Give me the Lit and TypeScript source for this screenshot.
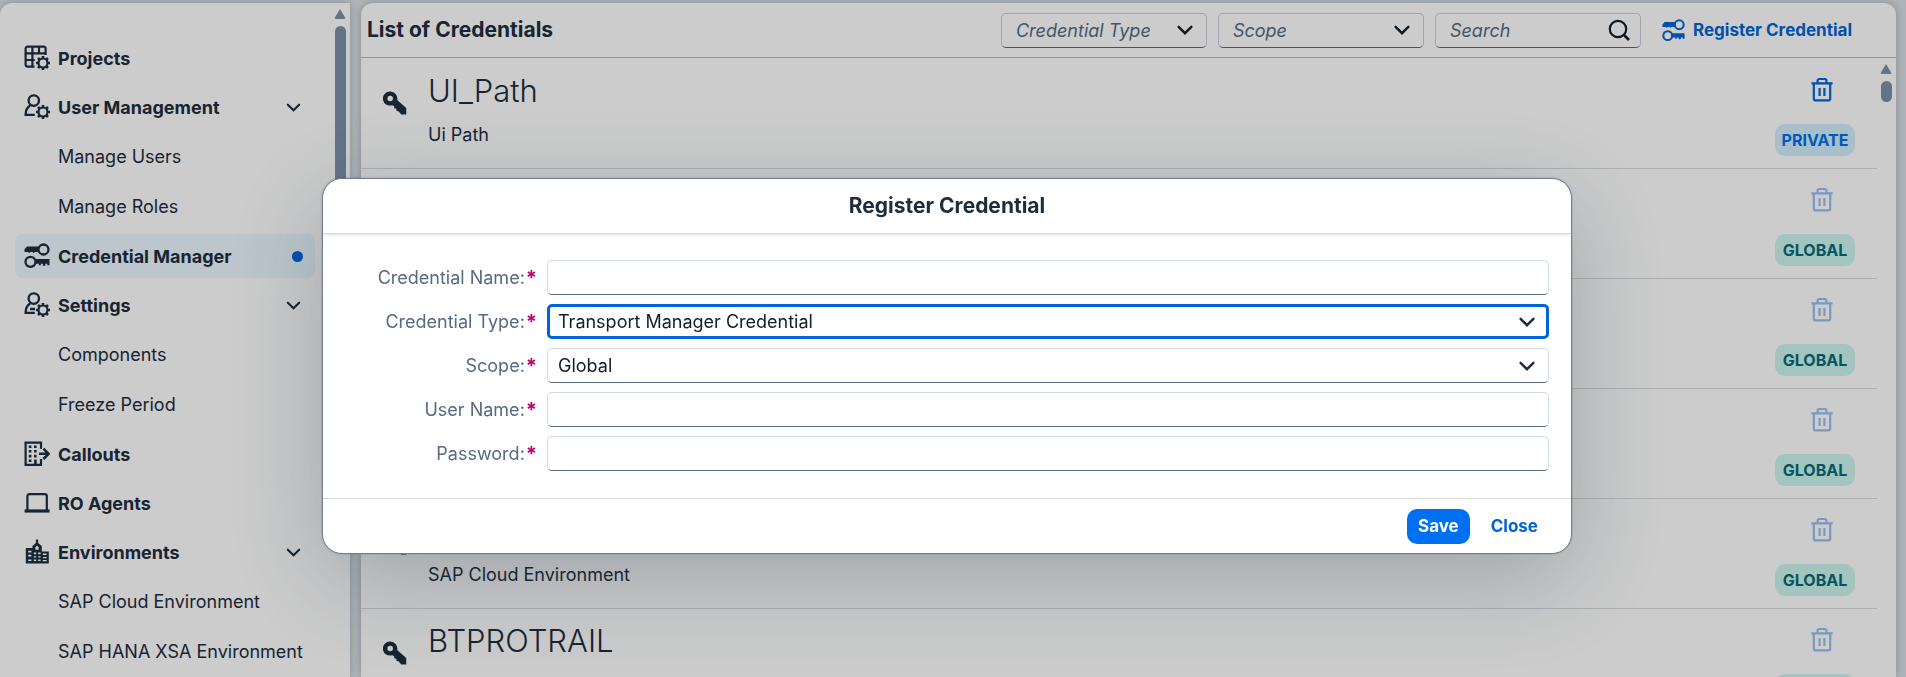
import { LitElement, html, css, svg, nothing, TemplateResult } from 'lit';
import { customElement, property } from 'lit/decorators.js';
import { classMap } from 'lit/directives/class-map.js';

const gear = svg`
  <circle cx="19" cy="18" r="4.5" fill="none" stroke="currentColor" stroke-width="2.2"/>
  <path d="M19 11v2.4M19 22.6V25M12 18h2.400M23.600 18H26M14 13l1.800 1.800M22.200 21.200L24 23M14 23l1.800-1.800M22.200 14.800L24 13" stroke="currentColor" stroke-width="2.600"/>`;

const keys = svg`
  <circle cx="19.5" cy="6.5" r="5" fill="none" stroke="currentColor" stroke-width="2.3"/>
  <path d="M14.8 3.4H3L.5 6.2V9H4l1.200 1 1.200-1h2l1.300 1 1.300-1h4z" fill="currentColor"/>
  <circle cx="6.5" cy="18.8" r="5" fill="none" stroke="currentColor" stroke-width="2.3"/>
  <path d="M11.200 16H25.500v6.200h-2.200v-1.400h-2v2h-2.400v-2h-2v1.400h-2v-1.400h-3.700z" fill="currentColor"/>`;

const icons: Record<string, TemplateResult> = {
  projects: svg`
    <path d="M10.500 21.600H3.600a2 2 0 0 1-2-2V3.600a2 2 0 0 1 2-2h16a2 2 0 0 1 2 2v6.400M1.600 8.400h20M1.600 15h9.200M8.400 1.600v20M15 1.600v6.800" fill="none" stroke="currentColor" stroke-width="2.200"/>${gear}`,
  user: svg`
    <circle cx="9.8" cy="6.600" r="5.200" fill="none" stroke="currentColor" stroke-width="2.300"/>
    <path d="M6.200 11.400C2.800 13.400 1.600 16.800 1.600 20.800h9.200" fill="none" stroke="currentColor" stroke-width="2.300"/>${gear}`,
  settings: svg`
    <circle cx="9.8" cy="6.600" r="5.200" fill="none" stroke="currentColor" stroke-width="2.300"/>
    <path d="M6.200 11.400C2.800 13.400 1.600 16.800 1.600 20.800h9.200M6 17h5" fill="none" stroke="currentColor" stroke-width="2.300"/>${gear}`,
  keys,
  callouts: svg`
    <path d="M17 8V1.600H1.600v22.200H17v-5.800" fill="none" stroke="currentColor" stroke-width="2.200"/>
    <path d="M11.400 23.600v-5M15 12.800h9M19.400 7.600l5.200 5.200-5.200 5.200" fill="none" stroke="currentColor" stroke-width="2.500"/>
    <path d="M4.800 4.400h2.600V7H4.800zM10 4.400h2.600V7H10zM4.800 9h2.600v2.600H4.800zM10 9h2.600v2.600H10zM4.800 13.800h2.600v2.600H4.800zM10 13.800h2.600v2.600H10zM4.800 18.400h2.600V21H4.800z" fill="currentColor"/>`,
  laptop: svg`
    <path d="M3.400 20V6.200a2 2 0 0 1 2-2h15.400a2 2 0 0 1 2 2V20" fill="none" stroke="currentColor" stroke-width="2.200"/>
    <path d="M.6 19.400h25v3.200H.600z" fill="currentColor"/>`,
  building: svg`
    <path fill-rule="evenodd" fill="currentColor" d="M11.900.600h2.200v3.400l3.700 3v5.400h7v12.200H1.800V9h6.600V7l3.500-3zM11.400 8v2.800h3.200V8L13 6.700zM4.200 11.800v1.600h3.200v-1.600zM9.800 13.600v1.600h2.400v-1.600zM14.200 13.600v1.600h2.400v-1.600zM18.800 14.600v1.400h3.800v-1.400zM4.200 15.800v1.600h3.200v-1.600zM9.800 17.200v1.400h2.400v-1.400zM14.200 17.200v1.400h2.400v-1.400zM18.800 18v1.200h3.800V18zM4.200 20.400V22h3.200v-1.600zM9.800 20.600V22h2.400v-1.400zM14.200 20.600V22h2.400v-1.400zM18.800 21v1.200h3.800V21z"/>`,
  key: svg`
    <path fill-rule="evenodd" fill="currentColor" d="M8 .600a7.600 7.600 0 0 1 7.400 9.200l9.800 8.600v7h-5.400l-3-3.400-2-.400-.400-2.400-2.200-.600-.200-2.400-2.200-.800A7.600 7.600 0 1 1 8 .600zM7.800 5.200a3 3 0 1 0 0 6 3 3 0 0 0 0-6z"/>`,
  trash: svg`
    <path d="M4.800 6.800v14.600a2 2 0 0 0 2 2h12.400a2 2 0 0 0 2-2V6.800M2.400 6.400h21.200M8.600 6V3.600a1.600 1.600 0 0 1 1.600-1.600h5.600a1.600 1.600 0 0 1 1.600 1.600V6M10.600 11v8M15.400 11v8" fill="none" stroke="currentColor" stroke-width="2.200"/>`,
  search: svg`
    <circle cx="12" cy="12" r="8.200" fill="none" stroke="currentColor" stroke-width="2.200"/>
    <path d="M18 18l5 5" stroke="currentColor" stroke-width="2.600"/>`,
  chevron: svg`
    <path d="M6.600 9.800l6.400 6.400 6.400-6.400" fill="none" stroke="currentColor" stroke-width="2.400" stroke-linecap="round"/>`,
};

@customElement('sap-icon')
export class SapIcon extends LitElement {
  @property() name = 'key';
  static styles = css`
    :host { display: block; flex: none; width: 26px; height: 26px; }
    svg { display: block; width: 100%; height: 100%; }
  `;
  render() {
    return html`<svg viewBox="0 0 26 26" aria-hidden="true">${icons[this.name]}</svg>`;
  }
}

interface NavItem { label: string; icon?: string; open?: boolean; selected?: boolean; }
const NAV: NavItem[] = [
  { label: 'Projects', icon: 'projects' },
  { label: 'User Management', icon: 'user', open: true },
  { label: 'Manage Users' },
  { label: 'Manage Roles' },
  { label: 'Credential Manager', icon: 'keys', selected: true },
  { label: 'Settings', icon: 'settings', open: true },
  { label: 'Components' },
  { label: 'Freeze Period' },
  { label: 'Callouts', icon: 'callouts' },
  { label: 'RO Agents', icon: 'laptop' },
  { label: 'Environments', icon: 'building', open: true },
  { label: 'SAP Cloud Environment' },
  { label: 'SAP HANA XSA Environment' },
];

@customElement('side-menu')
export class SideMenu extends LitElement {
  static styles = css`
    :host { display: flex; background: #fff; border-radius: 12px 0 0 0; overflow: hidden; box-shadow: 0 0 6px rgba(34, 53, 72, 0.3); }
    nav { flex: 1; padding: 33px 0 0 15px; display: flex; flex-direction: column; gap: 5px; }
    .item {
      box-sizing: border-box; flex: none; height: 44px; padding: 0 10px 0 9px; border: 0; border-radius: 8px; background: none;
      display: flex; align-items: center; gap: 8px; color: #1d2d3e; font: 700 18px Inter, sans-serif;
      text-align: left; text-decoration: none; white-space: nowrap;
    }
    .item.child { height: 45px; padding-left: 43px; font-weight: 400; }
    .item.selected { background: #ebf8ff; }
    .label { flex: 1; }
    .dot { width: 11px; height: 11px; margin-right: 2px; border-radius: 50%; background: #0064d9; }
    .chev { width: 23px; height: 23px; }
    .bar { width: 35px; padding: 6px 4px 0 0; box-sizing: border-box; display: flex; flex-direction: column; align-items: flex-end; gap: 7px; }
    .up { border: 6px solid transparent; border-top: 0; border-bottom: 10px solid #7b91a8; border-radius: 2px; }
    .thumb { width: 11px; height: 300px; border-radius: 6px; background: #7b91a8; }
  `;
  render() {
    return html`
      <nav aria-label="Main">
        ${NAV.map((n) => {
          const cls = classMap({ item: true, child: !n.icon, selected: !!n.selected });
          const body = html`
            ${n.icon ? html`<sap-icon name=${n.icon}></sap-icon>` : nothing}
            <span class="label">${n.label}</span>
            ${n.open ? html`<sap-icon class="chev" name="chevron"></sap-icon>` : nothing}
            ${n.selected ? html`<span class="dot"></span>` : nothing}`;
          return n.open
            ? html`<button class=${cls} aria-expanded="true">${body}</button>`
            : html`<a class=${cls} href="#">${body}</a>`;
        })}
      </nav>
      <div class="bar"><span class="up"></span><span class="thumb"></span></div>`;
  }
}

interface Credential { name: string; type: string; scope: 'PRIVATE' | 'GLOBAL'; }
const CREDENTIALS: Credential[] = [
  { name: 'UI_Path', type: 'Ui Path', scope: 'PRIVATE' },
  { name: '', type: '', scope: 'GLOBAL' },
  { name: '', type: '', scope: 'GLOBAL' },
  { name: '', type: '', scope: 'GLOBAL' },
  { name: '', type: 'SAP Cloud Environment', scope: 'GLOBAL' },
  { name: 'BTPROTRAIL', type: '', scope: 'GLOBAL' },
];

@customElement('credential-list')
export class CredentialList extends LitElement {
  static styles = css`
    :host {
      display: flex; flex-direction: column; min-width: 0; background: #fff; border-radius: 12px 12px 0 0; overflow: hidden;
      font: 18px Inter, sans-serif; color: #1d2d3e; box-shadow: 0 0 8px rgba(34, 53, 72, 0.3);
    }
    header {
      flex: none; height: 54px; padding: 0 44px 0 6px; border-bottom: 1px solid #b4bcc4;
      display: flex; align-items: center; justify-content: space-between;
    }
    h1 { margin: 0; font-size: 21px; font-weight: 700; line-height: 28px; }
    .tools { display: flex; align-items: center; gap: 11px; }
    .field { display: grid; grid-template-columns: 206px; align-items: center; }
    .field > * { grid-area: 1 / 1; }
    .field sap-icon { justify-self: end; margin-right: 9px; color: #131e29; pointer-events: none; }
    .box {
      box-sizing: border-box; width: 100%; height: 35px; padding: 0 40px 0 14px; appearance: none; background: #fff;
      border: 1px solid #c8ced6; border-bottom-color: #556b82; border-radius: 5px; outline: 0;
      font: italic 18px Inter, sans-serif; color: #556b82;
    }
    .box::placeholder { color: #556b82; opacity: 1; }
    .register {
      display: flex; align-items: center; gap: 8px; margin-left: 10px; padding: 0; border: 0; background: none;
      font: 700 17px Inter, sans-serif; color: #0064d9; white-space: nowrap;
    }
    .register sap-icon { width: 23px; height: 23px; }
    .body { flex: 1; min-height: 0; display: flex; }
    ul { flex: 1; min-width: 0; margin: 0; padding: 1px 0 0; list-style: none; }
    li {
      box-sizing: border-box; height: 110px; padding: 16px 22px 10px; border-bottom: 1px solid #d9dbde;
      display: flex; gap: 21px;
    }
    li > sap-icon { width: 24px; height: 24px; margin-top: 16px; }
    .text { flex: 1; display: flex; flex-direction: column; gap: 16px; }
    h2 { margin: 0; height: 32px; font-size: 31px; font-weight: 300; line-height: 32px; }
    p { margin: 0; line-height: 24px; }
    .side { width: 80px; display: flex; flex-direction: column; align-items: center; gap: 21px; }
    .delete { margin: 0 0 0 14px; padding: 2px 0 0; border: 0; background: none; color: #0064d9; }
    .delete:disabled { opacity: 0.4; }
    .badge {
      box-sizing: border-box; flex: none; width: 80px; height: 32px; border-radius: 10px; text-align: center;
      font-size: 16px; font-weight: 700; line-height: 32px; background: #cef6ee; color: #046c7a;
    }
    .badge.private { background: #d3effd; color: #0070f2; }
    .bar { width: 19px; padding: 6px 4px 0 0; box-sizing: border-box; display: flex; flex-direction: column; align-items: flex-end; gap: 7px; }
    .up { border: 6px solid transparent; border-top: 0; border-bottom: 10px solid #7b91a8; border-radius: 2px; }
    .thumb { width: 11px; height: 21px; border-radius: 6px; background: #7b91a8; }
  `;
  render() {
    return html`
      <header>
        <h1>List of Credentials</h1>
        <div class="tools">
          <div class="field">
            <select class="box" aria-label="Credential Type"><option>Credential Type</option></select>
            <sap-icon name="chevron"></sap-icon>
          </div>
          <div class="field">
            <select class="box" aria-label="Scope"><option>Scope</option></select>
            <sap-icon name="chevron"></sap-icon>
          </div>
          <div class="field">
            <input class="box" type="text" placeholder="Search" aria-label="Search" />
            <sap-icon name="search"></sap-icon>
          </div>
          <button class="register"><sap-icon name="keys"></sap-icon>Register Credential</button>
        </div>
      </header>
      <div class="body">
        <ul>
          ${CREDENTIALS.map((c) => html`
            <li>
              <sap-icon name="key"></sap-icon>
              <div class="text"><h2>${c.name}</h2><p>${c.type}</p></div>
              <div class="side">
                <button class="delete" aria-label="Delete" ?disabled=${c.scope === 'GLOBAL'}><sap-icon name="trash"></sap-icon></button>
                <span class=${classMap({ badge: true, private: c.scope === 'PRIVATE' })}>${c.scope}</span>
              </div>
            </li>`)}
        </ul>
        <div class="bar"><span class="up"></span><span class="thumb"></span></div>
      </div>`;
  }
}

interface Field { id: string; label: string; value?: string; type?: string; active?: boolean; }
const FIELDS: Field[] = [
  { id: 'name', label: 'Credential Name', type: 'text' },
  { id: 'type', label: 'Credential Type', value: 'Transport Manager Credential', active: true },
  { id: 'scope', label: 'Scope', value: 'Global' },
  { id: 'user', label: 'User Name', type: 'text' },
  { id: 'password', label: 'Password', type: 'password' },
];

@customElement('register-dialog')
export class RegisterDialog extends LitElement {
  static styles = css`
    :host { display: block; font: 18px Inter, sans-serif; color: #1d2d3e; }
    dialog {
      position: static; box-sizing: border-box; width: 100%; margin: 0; padding: 0; border: 1px solid #6f7c8a; border-radius: 20px; background: #fff;
      color: inherit; overflow: hidden; box-shadow: 0 0 2px rgba(34, 53, 72, 0.3), 0 25px 100px rgba(34, 53, 72, 0.27);
    }
    h2 {
      margin: 0; height: 54px; border-bottom: 1px solid #d9d9d9; box-shadow: 0 1px 3px rgba(0, 0, 0, 0.12);
      font-size: 21px; font-weight: 700; line-height: 54px; text-align: center;
    }
    form { padding: 26px 22px 27px; display: grid; gap: 9px; }
    .row { display: grid; grid-template-columns: 192px 1fr; column-gap: 10px; align-items: center; }
    label { display: flex; justify-content: flex-end; gap: 1px; color: #556b82; line-height: 24px; }
    .star { color: #ba066c; font-size: 20px; font-weight: 700; }
    .field { display: grid; align-items: center; }
    .field > * { grid-area: 1 / 1; }
    .field sap-icon { justify-self: end; margin-right: 9px; pointer-events: none; }
    .box {
      box-sizing: border-box; width: 100%; height: 35px; padding: 0 40px 0 10px; appearance: none; background: #fff;
      border: 1px solid #d3d9e0; border-bottom-color: #556b82; border-radius: 5px; outline: 0;
      font: 18px Inter, sans-serif; color: #131e29;
    }
    .box.active { padding-left: 8px; border: 3px solid #0064d9; }
    footer {
      height: 54px; padding: 0 22px; border-top: 1px solid #d9d9d9;
      display: flex; align-items: center; justify-content: flex-end; gap: 10px;
    }
    button {
      height: 35px; padding: 0 11px; border: 0; border-radius: 10px; background: none; color: #0064d9;
      font: 600 17px Inter, sans-serif;
    }
    button { font-weight: 700; }
    .save { background: #0070f2; color: #fff; }
  `;
  render() {
    return html`
      <dialog open aria-label="Register Credential">
        <h2>Register Credential</h2>
        <form>
          ${FIELDS.map((f) => html`
            <div class="row">
              <label for=${f.id}><span>${f.label}:</span><span class="star">*</span></label>
              <div class="field">
                ${f.type
                  ? html`<input class="box" id=${f.id} type=${f.type} autocomplete="off" />`
                  : html`<select class=${classMap({ box: true, active: !!f.active })} id=${f.id}><option>${f.value}</option></select>
                      <sap-icon name="chevron"></sap-icon>`}
              </div>
            </div>`)}
        </form>
        <footer><button class="save">Save</button><button>Close</button></footer>
      </dialog>`;
  }
}

@customElement('app-root')
export class AppRoot extends LitElement {
  static styles = css`
    :host { display: block; height: 100vh; overflow: hidden; background: #dde2e6; }
    .shell {
      box-sizing: border-box; height: 100%; padding: 3px 10px 0 0; overflow: hidden;
      display: grid; grid-template: minmax(0, 1fr) / 350px minmax(0, 1fr); column-gap: 11px;
    }
    .overlay {
      position: fixed; inset: 0; padding: 178px 12px 0 0; background: rgba(0, 0, 0, 0.2);
      display: flex; justify-content: center; align-items: flex-start;
    }
    register-dialog { width: 1250px; max-width: 90%; }
  `;
  render() {
    return html`
      <div class="shell">
        <side-menu></side-menu>
        <credential-list></credential-list>
      </div>
      <div class="overlay"><register-dialog></register-dialog></div>`;
  }
}
